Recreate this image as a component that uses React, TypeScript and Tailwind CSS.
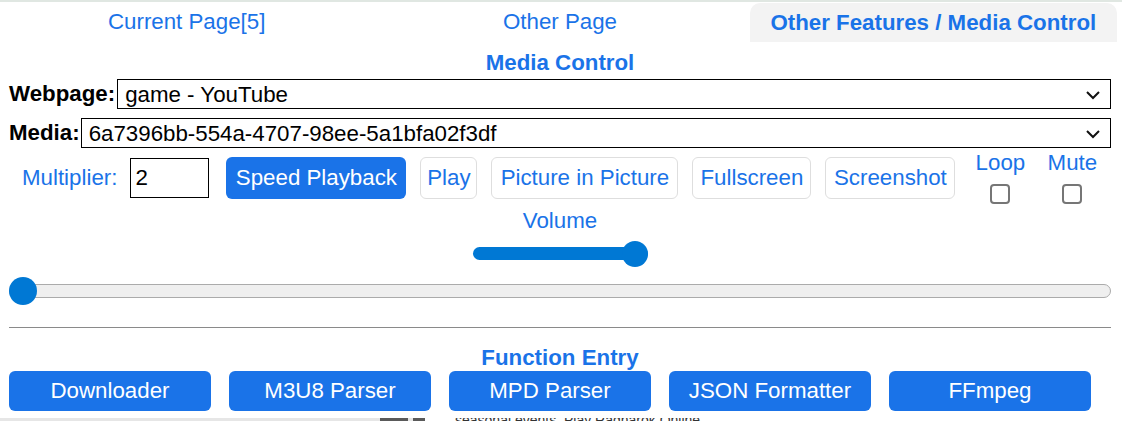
import React from "react";

const blue = "text-[#1a73e8]";

const Chevron = () => (
  <svg width="16" height="10" viewBox="0 0 16 10" className="shrink-0">
    <polyline points="2,2 8,8 14,2" fill="none" stroke="#111" strokeWidth="2" />
  </svg>
);

const FakeSelect = ({ value }: { value: string }) => (
  <div className="flex-1 h-[30px] border border-black flex items-center justify-between pl-[7px] pr-[9px] pt-[2px] text-black leading-none">
    <span>{value}</span>
    <Chevron />
  </div>
);

const OutlineButton = ({ label, width }: { label: string; width: string }) => (
  <button className={`${width} h-[42px] rounded-[6px] border border-[#dedede] bg-white ${blue} flex items-center justify-center`}>
    {label}
  </button>
);

const CheckCol = ({ label, width }: { label: string; width: string }) => (
  <div className={`${width} flex flex-col items-center`}>
    <span className={`${blue} leading-[25px]`}>{label}</span>
    <div className="mt-[9px] w-[20px] h-[20px] rounded-[4px] border-2 border-[#767676] bg-white" />
  </div>
);

const entries = ["Downloader", "M3U8 Parser", "MPD Parser", "JSON Formatter", "FFmpeg"];

export default function App() {
  return (
    <div className="w-[1122px] h-[421px] overflow-hidden bg-white font-['Liberation_Sans',Arial,sans-serif] text-[22.3px]">
      <div className="h-[2px] bg-[#e0e7e2]" />
      <div className="w-[1120px] flex flex-col">
        {/* tabs */}
        <div className="grid grid-cols-3 h-[40px]">
          <div className={`flex items-center justify-center ${blue}`}>Current Page[5]</div>
          <div className={`flex items-center justify-center ${blue}`}>Other Page</div>
          <div className={`mx-[3px] mt-[1px] rounded-t-[10px] bg-[#f3f3f3] flex items-center justify-center font-bold ${blue}`}>
            Other Features / Media Control
          </div>
        </div>

        <div className={`mt-[8px] leading-[25px] text-center font-bold ${blue}`}>Media Control</div>

        <div className="px-[9px] flex flex-col">
          <div className="mt-[2px] flex items-center">
            <span className="font-bold text-black mr-[2px]">Webpage:</span>
            <FakeSelect value="game - YouTube" />
          </div>
          <div className="mt-[6px] flex items-center">
            <span className="font-bold text-black mr-[1px]">Media:</span>
            <FakeSelect value="6a7396bb-554a-4707-98ee-5a1bfa02f3df" />
          </div>

          {/* controls */}
          <div className="flex items-start">
            <div className="mt-[7px] h-[42px] flex items-center pl-[13px]">
              <span className={blue}>Multiplier:</span>
              <input
                readOnly
                value="2"
                className="ml-[13px] w-[79px] h-[40px] border border-black px-[4px] text-black outline-none"
              />
            </div>
            <div className="mt-[7px] ml-[17px] flex gap-[14px]">
              <button className="w-[180px] h-[42px] rounded-[6px] bg-[#1a73e8] text-white flex items-center justify-center">
                Speed Playback
              </button>
              <OutlineButton label="Play" width="w-[57px]" />
              <OutlineButton label="Picture in Picture" width="w-[187px]" />
              <OutlineButton label="Fullscreen" width="w-[119px]" />
              <OutlineButton label="Screenshot" width="w-[130px]" />
            </div>
            <div className="ml-[20px] flex gap-[22px]">
              <CheckCol label="Loop" width="w-[50px]" />
              <CheckCol label="Mute" width="w-[50px]" />
            </div>
          </div>

          <div className={`mt-[4px] leading-[25px] text-center ${blue}`}>Volume</div>

          {/* volume slider */}
          <div className="mt-[7px] mx-auto w-[175px] h-[28px] relative flex items-center">
            <div className="w-full h-[13px] rounded-full bg-[#0078d4]" />
            <div className="absolute right-0 top-[1px] w-[26px] h-[26px] rounded-full bg-[#0078d4]" />
          </div>

          {/* seek slider */}
          <div className="mt-[9px] h-[28px] relative flex items-center">
            <div className="w-full h-[14px] rounded-full bg-[#efefef] border border-[#ababab]" />
            <div className="absolute left-0 top-0 w-[28px] h-[28px] rounded-full bg-[#0078d4]" />
          </div>

          <div className="mt-[22px] h-px bg-[#8a8a8a]" />

          <div className={`mt-[17px] leading-[25px] text-center font-bold ${blue}`}>Function Entry</div>

          <div className="mt-[1px] flex gap-[18px]">
            {entries.map((e) => (
              <button
                key={e}
                className="w-[202px] h-[40px] rounded-[6px] bg-[#1a73e8] text-white flex items-center justify-center"
              >
                {e}
              </button>
            ))}
          </div>
        </div>
      </div>

      {/* page content peeking below the popup */}
      <div className="mt-[7px] h-[5px] overflow-hidden flex">
        <div className="w-[380px] bg-[#e6e6e6]" />
        <div className="w-[28px] bg-[#5a5a5a]" />
        <div className="w-[5px] bg-[#e6e6e6]" />
        <div className="w-[12px] bg-[#5a5a5a]" />
        <div className="ml-[30px] -mt-[5px] text-[14px] leading-[14px] text-[#333]">
          seasonal events. Play Ragnarok Online...
        </div>
      </div>
    </div>
  );
}
